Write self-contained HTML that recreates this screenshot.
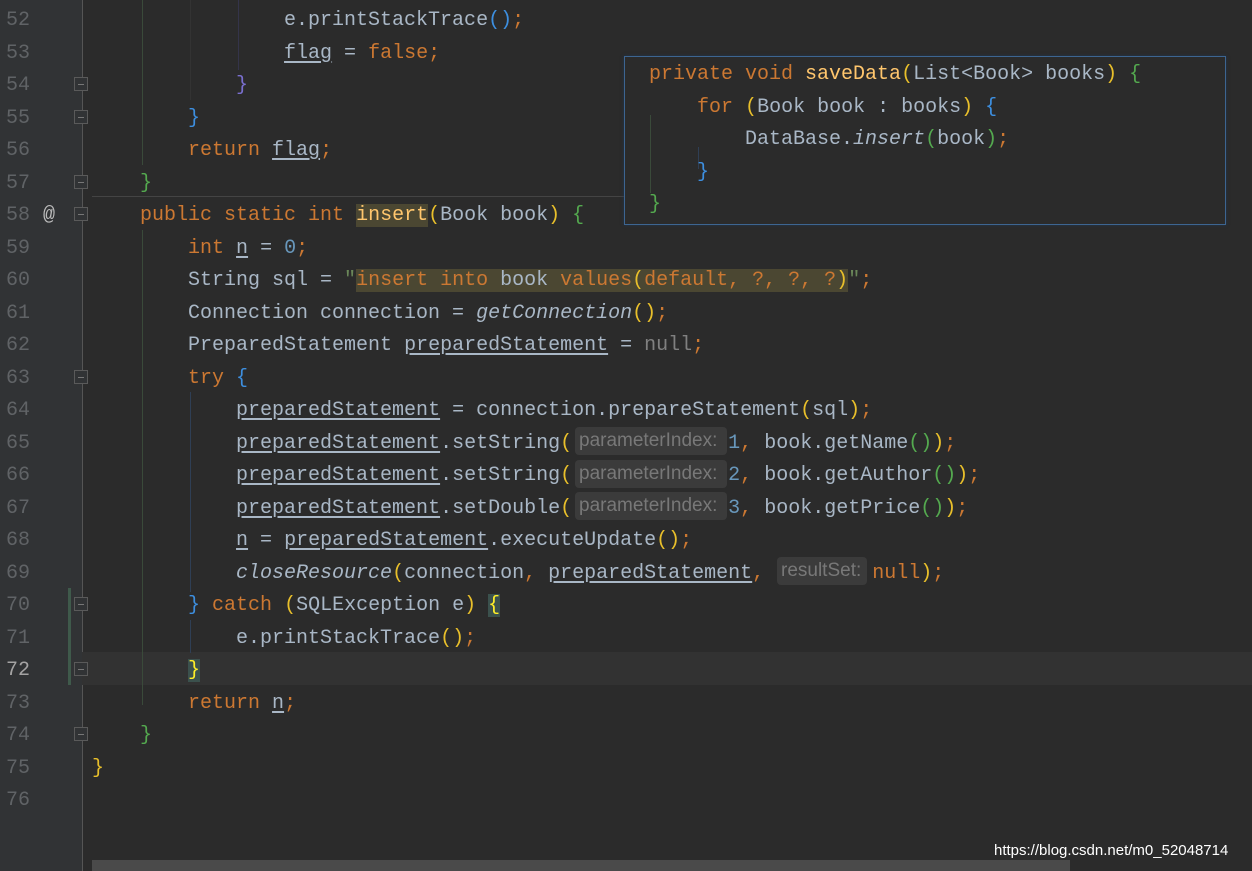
<!DOCTYPE html>
<html><head><meta charset="utf-8"><style>
body{margin:0;width:1252px;height:871px;background:#2b2b2b;overflow:hidden;position:relative;font-family:"Liberation Mono","DejaVu Sans Mono",monospace;font-size:20px;color:#a9b7c6}
.g{position:absolute;left:0;top:0;width:82px;height:871px;background:#313335;border-right:1px solid #555}
.ln{position:absolute;left:0;width:30px;text-align:right;color:#606366;line-height:32.5px;height:32.5px;margin-top:2px}
.l{position:absolute;left:92px;white-space:pre;line-height:32.5px;height:32.5px;margin-top:2px}
.k{color:#cc7832}.n{color:#6897bb}.m{color:#ffc66d}.u{text-decoration:underline;text-underline-offset:3px}
.i{font-style:italic}.y{color:#e8bf2b}.gr{color:#54a94f}.b{color:#3d8fe0}.p{color:#7a6fd0}.nu{color:#808080}
.h{position:absolute;font-family:"Liberation Sans",sans-serif;font-size:19px;color:#787878;background:#3b3b3b;border-radius:4px;height:28px;line-height:28px;padding:0 4px;box-sizing:border-box}
.ig{position:absolute;width:1px;background:#3a4a3a}
.f{position:absolute;left:74px;width:14px;height:14px;border:1px solid #5a5a5a;box-sizing:border-box;background:#313335}
.f::after{content:"";position:absolute;left:3px;top:6px;width:6px;height:1px;background:#777}
</style></head><body>
<div class="g"></div>
<div style="position:absolute;left:82px;top:652px;width:1170px;height:33px;background:#323232"></div>
<div style="position:absolute;left:92px;top:196px;width:533px;height:1px;background:#444"></div>
<div style="position:absolute;left:68px;top:588px;width:3px;height:97px;background:#3f5a4b"></div>
<div class="ig" style="left:142px;top:230px;height:475px"></div>
<div class="ig" style="left:142px;top:0;height:165px"></div>
<div class="ig" style="left:190px;top:0;height:100px;background:#333"></div>
<div class="ig" style="left:238px;top:0;height:70px;background:#34344a"></div>
<div class="ig" style="left:190px;top:620px;height:33px;background:#2f3f55"></div>
<div class="ig" style="left:190px;top:392px;height:200px;background:#2f3f55"></div>
<div class="ln" style="top:3px">52</div><div class="ln" style="top:35.5px">53</div><div class="ln" style="top:68px">54</div><div class="ln" style="top:100.5px">55</div><div class="ln" style="top:133px">56</div><div class="ln" style="top:165.5px">57</div><div class="ln" style="top:198px">58</div><div class="ln" style="top:230.5px">59</div><div class="ln" style="top:263px">60</div><div class="ln" style="top:295.5px">61</div><div class="ln" style="top:328px">62</div><div class="ln" style="top:360.5px">63</div><div class="ln" style="top:393px">64</div><div class="ln" style="top:425.5px">65</div><div class="ln" style="top:458px">66</div><div class="ln" style="top:490.5px">67</div><div class="ln" style="top:523px">68</div><div class="ln" style="top:555.5px">69</div><div class="ln" style="top:588px">70</div><div class="ln" style="top:620.5px">71</div><div class="ln" style="top:653px;color:#a4a3a3">72</div><div class="ln" style="top:685.5px">73</div><div class="ln" style="top:718px">74</div><div class="ln" style="top:750.5px">75</div><div class="ln" style="top:783px">76</div>
<div style="position:absolute;left:43px;top:200px;line-height:32.5px;color:#bbb">@</div>
<div class="f" style="top:77px"></div><div class="f" style="top:110px"></div><div class="f" style="top:175px"></div><div class="f" style="top:207px"></div><div class="f" style="top:370px"></div><div class="f" style="top:597px"></div><div class="f" style="top:662px"></div><div class="f" style="top:727px"></div>
<div class="l" style="top:3px">                e.printStackTrace<span class="b">()</span><span class="k">;</span></div>
<div class="l" style="top:35.5px">                <span class="u">flag</span> = <span class="k">false;</span></div>
<div class="l" style="top:68px">            <span class="p">}</span></div>
<div class="l" style="top:100.5px">        <span class="b">}</span></div>
<div class="l" style="top:133px">        <span class="k">return</span> <span class="u">flag</span><span class="k">;</span></div>
<div class="l" style="top:165.5px">    <span class="gr">}</span></div>
<div class="l" style="top:198px">    <span class="k">public static int</span> <span class="m" style="background:#4b4732">insert</span><span class="y">(</span>Book book<span class="y">)</span> <span class="gr">{</span></div>
<div class="l" style="top:230.5px">        <span class="k">int</span> <span class="u">n</span> = <span class="n">0</span><span class="k">;</span></div>
<div class="l" style="top:263px">        String sql = <span style="color:#6a8759">"</span><span style="background:#4b4732;color:#cc7832">insert into <span style="color:#a9b7c6">book</span> values<span class="y">(</span>default, ?, ?, ?<span class="y">)</span></span><span style="color:#6a8759">"</span><span class="k">;</span></div>
<div class="l" style="top:295.5px">        Connection connection = <span class="i">getConnection</span><span class="y">()</span><span class="k">;</span></div>
<div class="l" style="top:328px">        PreparedStatement <span class="u">preparedStatement</span> = <span class="nu">null</span><span class="k">;</span></div>
<div class="l" style="top:360.5px">        <span class="k">try</span> <span class="b">{</span></div>
<div class="l" style="top:393px">            <span class="u">preparedStatement</span> = connection.prepareStatement<span class="y">(</span>sql<span class="y">)</span><span class="k">;</span></div>
<div class="l" style="top:425.5px">            <span class="u">preparedStatement</span>.setString<span class="y">(</span>             <span class="n">1</span><span class="k">,</span> book.getName<span class="gr">()</span><span class="y">)</span><span class="k">;</span></div>
<div class="l" style="top:458px">            <span class="u">preparedStatement</span>.setString<span class="y">(</span>             <span class="n">2</span><span class="k">,</span> book.getAuthor<span class="gr">()</span><span class="y">)</span><span class="k">;</span></div>
<div class="l" style="top:490.5px">            <span class="u">preparedStatement</span>.setDouble<span class="y">(</span>             <span class="n">3</span><span class="k">,</span> book.getPrice<span class="gr">()</span><span class="y">)</span><span class="k">;</span></div>
<div class="l" style="top:523px">            <span class="u">n</span> = <span class="u">preparedStatement</span>.executeUpdate<span class="y">()</span><span class="k">;</span></div>
<div class="l" style="top:555.5px">            <span class="i">closeResource</span><span class="y">(</span>connection<span class="k">,</span> <span class="u">preparedStatement</span><span class="k">,</span>         <span class="k">null</span><span class="y">)</span><span class="k">;</span></div>
<div class="l" style="top:588px">        <span class="b">}</span> <span class="k">catch</span> <span class="y">(</span>SQLException e<span class="y">)</span> <span style="background:#3b514d;color:#ffef28">{</span></div>
<div class="l" style="top:620.5px">            e.printStackTrace<span class="y">()</span><span class="k">;</span></div>
<div class="l" style="top:653px">        <span style="background:#3b514d;color:#ffef28">}</span></div>
<div class="l" style="top:685.5px">        <span class="k">return</span> <span class="u">n</span><span class="k">;</span></div>
<div class="l" style="top:718px">    <span class="gr">}</span></div>
<div class="l" style="top:750.5px"><span class="y">}</span></div>
<div class="h" style="left:575px;top:427px;width:152px">parameterIndex:</div>
<div class="h" style="left:575px;top:460px;width:152px">parameterIndex:</div>
<div class="h" style="left:575px;top:492px;width:152px">parameterIndex:</div>
<div class="h" style="left:777px;top:557px;width:90px">resultSet:</div>
<div style="position:absolute;left:624px;top:56px;width:600px;height:167px;background:#2b2b2b;border:1px solid #3d6591;box-shadow:0 0 3px #1f3550">
<div class="ig" style="left:25px;top:58px;height:78px"></div>
<div class="ig" style="left:73px;top:90px;height:22px;background:#2f3f55"></div>
</div>
<div class="l" style="left:649px;top:57px"><span class="k">private void</span> <span class="m">saveData</span><span class="y">(</span>List&lt;Book&gt; books<span class="y">)</span> <span class="gr">{</span></div>
<div class="l" style="left:649px;top:89.5px">    <span class="k">for</span> <span class="y">(</span>Book book : books<span class="y">)</span> <span class="b">{</span></div>
<div class="l" style="left:649px;top:122px">        DataBase.<span class="i">insert</span><span class="gr">(</span>book<span class="gr">)</span><span class="k">;</span></div>
<div class="l" style="left:649px;top:154.5px">    <span class="b">}</span></div>
<div class="l" style="left:649px;top:187px"><span class="gr">}</span></div>
<div style="position:absolute;left:92px;top:860px;width:978px;height:11px;background:#4a4a4a"></div>
<div style="position:absolute;left:994px;top:842px;font-family:'Liberation Sans',sans-serif;font-size:15px;color:#fff">https://blog.csdn.net/m0_52048714</div>
</body></html>
